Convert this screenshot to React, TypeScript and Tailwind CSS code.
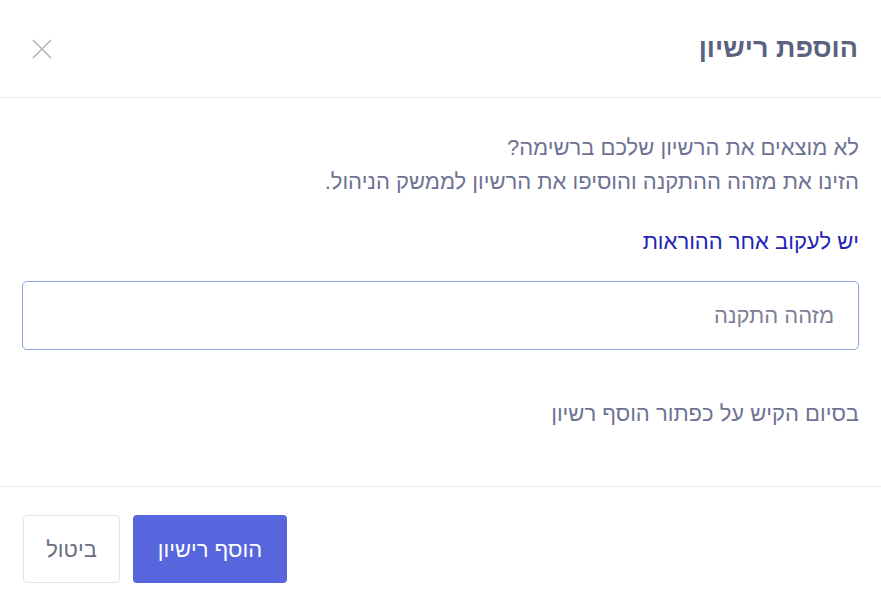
import React from "react";

export default function App() {
  return (
    <div
      dir="rtl"
      className="w-[881px] h-[612px] bg-white flex flex-col"
      style={{ fontFamily: '"Liberation Sans", Arial, sans-serif' }}
    >
      <div className="h-[98px] border-b border-[#ebedf2] flex items-center justify-between pr-[23px] pl-[30px] shrink-0">
        <h2 className="text-[27px] font-bold text-[#5b6280]">הוספת רישיון</h2>
        <button className="text-[#b3b5bd]">
          <svg width="24" height="24" viewBox="0 0 24 24" fill="none" stroke="currentColor" strokeWidth="1.6">
            <path d="M3 3L21 21M21 3L3 21" />
          </svg>
        </button>
      </div>
      <div className="flex-1 px-[22px] pt-[33px] flex flex-col">
        <p className="text-[22px] leading-[34px] text-[#6e7393]">
          לא מוצאים את הרשיון שלכם ברשימה?
          <br />
          הזינו את מזהה ההתקנה והוסיפו את הרשיון לממשק הניהול.
        </p>
        <a className="mt-[26px] text-[22px] leading-[34px] text-[#2424b4]">יש לעקוב אחר ההוראות</a>
        <input
          className="mt-[22px] h-[69px] w-full border border-[#8ea2e4] rounded-[5px] px-[24px] text-[22px] placeholder:text-[#7e8194] outline-none"
          placeholder="מזהה התקנה"
        />
        <p className="mt-[47px] text-[22px] leading-[34px] text-[#6e7393]">בסיום הקיש על כפתור הוסף רשיון</p>
      </div>
      <div className="h-[126px] border-t border-[#ebedf2] flex items-start justify-end gap-[13px] px-[23px] pt-[28px] shrink-0">
        <button className="h-[68px] w-[154px] rounded-[4px] bg-[#5866dd] text-white text-[22px]">הוסף רישיון</button>
        <button className="h-[68px] w-[97px] rounded-[4px] border border-[#e3e5ea] text-[#6b6e80] text-[22px]">ביטול</button>
      </div>
    </div>
  );
}
